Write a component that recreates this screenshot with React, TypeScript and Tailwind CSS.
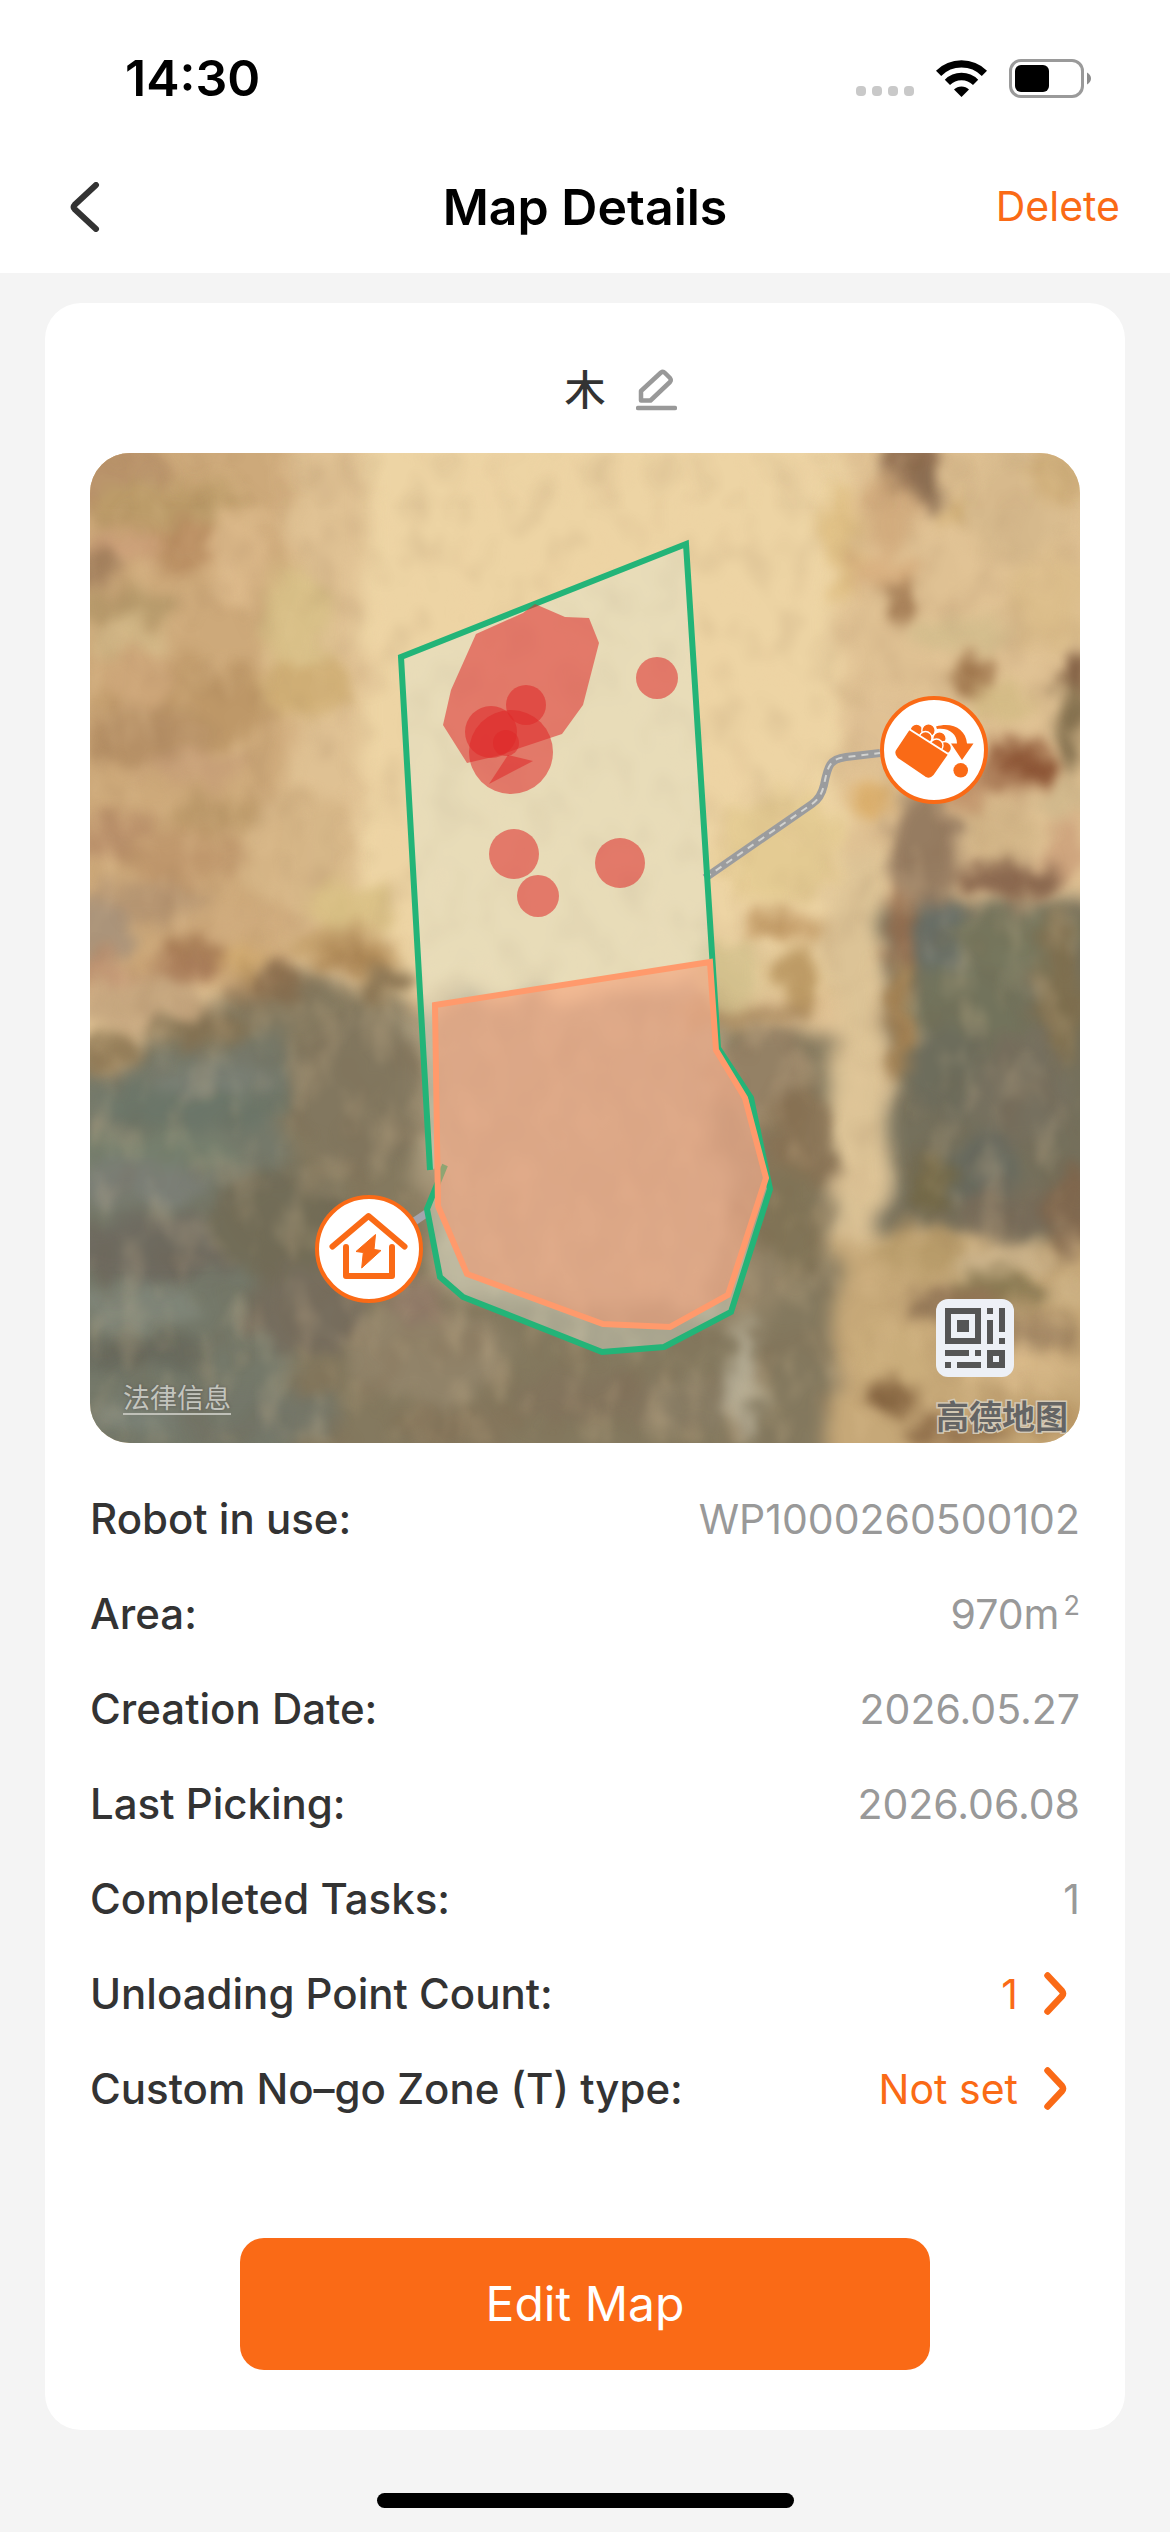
import type { ReactNode } from "react";

type Blob = [cx: number, cy: number, rx: number, ry: number, fill: string];

// soft patches of ground, painted in order over the base terrain
const groundPatches: Blob[] = [
  [20, 20, 60, 40, "#b8926a"],
  [83, 54, 80, 26, "#bb9b68"],
  [93, 94, 34, 24, "#b88c60"],
  [30, 92, 40, 16, "#cda07a"],
  [5, 117, 26, 18, "#a17e5c"],
  [33, 155, 50, 18, "#b5996a"],
  [35, 185, 44, 18, "#d2b887"],
  [207, 170, 34, 60, "#d9c188"],
  [150, 100, 30, 50, "#dcb98a"],
  [100, 250, 90, 44, "#bd9767"],
  [50, 230, 34, 34, "#cda679"],
  [57, 285, 70, 28, "#b48e64"],
  [215, 237, 50, 26, "#cfae74"],
  [100, 315, 50, 16, "#c79f78"],
  [120, 360, 50, 18, "#bc9a6a"],
  [30, 385, 50, 24, "#b98f6a"],
  [100, 405, 70, 28, "#bf976c"],
  [210, 400, 60, 60, "#d6b687"],
  [260, 455, 40, 26, "#d8bf83"],
  [57, 450, 60, 22, "#b59572"],
  [10, 480, 34, 34, "#a8927a"],
  [150, 468, 70, 16, "#d0ac7e"],
  [100, 492, 34, 14, "#a67b54"],
  [250, 492, 60, 16, "#c39f6a"],
  [93, 514, 34, 16, "#a67856"],
  [150, 508, 26, 14, "#cfa86c"],
  [50, 550, 60, 32, "#c4a57e"],
  [20, 520, 30, 16, "#bd9070"],
  [263, 506, 36, 12, "#a57e4c"],
  [180, 530, 34, 14, "#85694a"],
  [295, 530, 30, 18, "#86704f"],
  [110, 578, 50, 14, "#837253"],
  [20, 600, 34, 16, "#8f7955"],
  [100, 655, 90, 24, "#6b7669"],
  [60, 700, 90, 22, "#76806e"],
  [125, 625, 60, 20, "#7a8075"],
  [270, 640, 70, 80, "#82775f"],
  [50, 730, 70, 22, "#7c8078"],
  [67, 795, 100, 34, "#6e6a60"],
  [50, 853, 60, 24, "#808679"],
  [40, 900, 70, 18, "#686b5f"],
  [190, 770, 70, 60, "#726c57"],
  [217, 860, 60, 44, "#766d5e"],
  [150, 963, 100, 26, "#74776a"],
  [40, 965, 44, 18, "#7b8277"],
  [340, 900, 80, 50, "#93856b"],
  [370, 970, 70, 22, "#85765c"],
  [330, 850, 30, 20, "#917a68"],
  [510, 945, 90, 24, "#83745d"],
  [600, 950, 50, 30, "#897d65"],
  [670, 620, 50, 44, "#968266"],
  [710, 690, 34, 60, "#8a7456"],
  [690, 770, 40, 60, "#817457"],
  [660, 830, 40, 40, "#938468"],
  [640, 520, 34, 34, "#d2c08c"],
  [710, 525, 26, 34, "#b8955f"],
  [655, 563, 70, 12, "#ac8d62"],
  [690, 474, 44, 12, "#bd945f"],
  [690, 395, 60, 60, "#e4cb92"],
  [653, 925, 13, 64, "#bab29a"],
  [752, 85, 18, 60, "#e0c084"],
  [800, 60, 26, 44, "#d1aa7c"],
  [820, 10, 30, 24, "#866449"],
  [836, 38, 13, 20, "#80634a"],
  [868, 60, 18, 16, "#cdab70"],
  [930, 50, 60, 60, "#d6b98c"],
  [975, 20, 30, 30, "#cfae7a"],
  [790, 118, 36, 14, "#d6ac7c"],
  [808, 150, 13, 22, "#99704a"],
  [870, 180, 50, 16, "#d3bd8d"],
  [960, 150, 40, 50, "#dbbd8a"],
  [883, 220, 14, 18, "#8c6038"],
  [910, 250, 30, 22, "#d3bb85"],
  [987, 224, 15, 22, "#76533a"],
  [981, 274, 14, 48, "#786646"],
  [790, 270, 34, 34, "#dfc094"],
  [928, 312, 36, 20, "#844a2c"],
  [905, 330, 36, 14, "#9c6a48"],
  [780, 345, 24, 18, "#dcae68"],
  [865, 345, 40, 14, "#c79970"],
  [835, 400, 34, 60, "#8f755c"],
  [910, 380, 40, 30, "#d3b688"],
  [975, 345, 26, 22, "#d0b88c"],
  [977, 400, 20, 34, "#cda27c"],
  [920, 428, 54, 20, "#836049"],
  [810, 480, 12, 50, "#9a7050"],
  [850, 485, 26, 40, "#67706a"],
  [930, 490, 70, 34, "#77785f"],
  [810, 570, 12, 60, "#a88250"],
  [880, 560, 60, 50, "#72745d"],
  [970, 540, 24, 80, "#80704f"],
  [860, 620, 44, 50, "#6d6d5d"],
  [930, 640, 50, 60, "#777160"],
  [890, 715, 36, 34, "#666a60"],
  [840, 730, 22, 30, "#736846"],
  [930, 760, 60, 26, "#786c5a"],
  [980, 760, 20, 50, "#82684e"],
  [905, 806, 60, 16, "#ccb48c"],
  [975, 840, 24, 20, "#cdb285"],
  [830, 800, 50, 26, "#b79b69"],
  [905, 838, 50, 20, "#857650"],
  [860, 852, 50, 18, "#8f7354"],
  [930, 880, 60, 18, "#9a7f5e"],
  [800, 900, 40, 30, "#cbae7c"],
  [930, 915, 70, 20, "#d6b787"],
  [805, 945, 24, 16, "#805f3c"],
  [870, 978, 60, 14, "#8f6e4a"],
  [950, 968, 50, 14, "#b3905f"],
];

const noGoCircles = [
  { cx: 436, cy: 252, r: 20 },
  { cx: 401, cy: 279, r: 26 },
  { cx: 421, cy: 299, r: 42 },
  { cx: 416, cy: 290, r: 13 },
  { cx: 424, cy: 401, r: 25 },
  { cx: 448, cy: 443, r: 21 },
  { cx: 567, cy: 225, r: 21 },
  { cx: 530, cy: 410, r: 25 },
];

const FIELD = "340,717 311,204 596,91 628,595 661,645 680,736 641,859 574,894 512,899 373,844 350,824 337,756 355,712";
const PICKED = "345,552 620,509 626,597 655,645 676,725 638,842 580,874 513,871 377,821 348,753";
const ROAD = "M615 425 L722 351 Q731 345 734 332 C738 312 740 306 756 304 L790 300";

function Terrain() {
  return (
    <>
      <defs>
        <filter id="soft" x="-5%" y="-5%" width="110%" height="110%" colorInterpolationFilters="sRGB">
          <feTurbulence type="fractalNoise" baseFrequency="0.02" numOctaves="3" seed="3" result="n" />
          <feDisplacementMap in="SourceGraphic" in2="n" scale="50" xChannelSelector="R" yChannelSelector="G" />
          <feGaussianBlur stdDeviation="9" />
        </filter>
        <filter id="patchy" x="-10%" y="-10%" width="120%" height="120%" colorInterpolationFilters="sRGB">
          <feGaussianBlur in="SourceGraphic" stdDeviation="6" result="b" />
          <feTurbulence type="fractalNoise" baseFrequency="0.035 0.03" numOctaves="3" seed="11" result="n" />
          <feDisplacementMap in="b" in2="n" scale="36" xChannelSelector="R" yChannelSelector="G" />
          <feGaussianBlur stdDeviation="5" />
        </filter>
        <filter id="dark" x="0" y="0" width="100%" height="100%" colorInterpolationFilters="sRGB">
          <feTurbulence type="fractalNoise" baseFrequency="0.032 0.024" numOctaves="3" seed="7" />
          <feColorMatrix values="0 0 0 0 0.42  0 0 0 0 0.28  0 0 0 0 0.18  1.8 0 0 0 -0.85" />
          <feGaussianBlur stdDeviation="4" />
        </filter>
        <filter id="light" x="0" y="0" width="100%" height="100%" colorInterpolationFilters="sRGB">
          <feTurbulence type="fractalNoise" baseFrequency="0.036 0.02" numOctaves="3" seed="21" />
          <feColorMatrix values="0 0 0 0 0.94  0 0 0 0 0.82  0 0 0 0 0.64  0 1.8 0 0 -0.85" />
          <feGaussianBlur stdDeviation="3" />
        </filter>
      </defs>
      <rect width="990" height="990" fill="#dfc193" />
      <g filter="url(#soft)">
        <rect x="-60" y="-60" width="260" height="600" fill="#cda97a" />
        <rect x="270" y="-60" width="480" height="600" fill="#edd4a4" />
        <path d="M-60 605 L80 590 L140 540 L220 525 L300 535 L360 560 L520 545 L640 570 L742 580 L742 1060 L-60 1060 Z" fill="#84795f" />
        <path d="M-60 620 L80 605 L200 570 L200 1060 L-60 1060 Z" fill="#75796a" />
        <path d="M300 560 L630 530 L630 860 L350 840 Z" fill="#a89a7c" />
        <rect x="800" y="450" width="240" height="330" fill="#75705c" />
        <rect x="742" y="400" width="54" height="660" fill="#dcc396" />
        <rect x="742" y="780" width="300" height="280" fill="#c6a878" />
      </g>
      <g filter="url(#patchy)" opacity="0.9">
        {groundPatches.map(([cx, cy, rx, ry, fill], i) => (
          <ellipse key={i} cx={cx} cy={cy} rx={rx} ry={ry} fill={fill} />
        ))}
      </g>
      <rect width="990" height="990" filter="url(#dark)" opacity="0.16" />
      <rect width="990" height="990" filter="url(#light)" opacity="0.3" />
    </>
  );
}

function UnloadMarker() {
  return (
    <g transform="translate(790 243)">
      <circle cx="54" cy="54" r="52" fill="#fff" stroke="#fa6a16" strokeWidth="4" />
      <g fill="#fa6a16">
        <g stroke="#fff" strokeWidth="1.4">
          <circle cx="36.5" cy="34.5" r="6.5" />
          <circle cx="48.5" cy="34.5" r="6.7" />
          <circle cx="45.5" cy="42" r="6.5" />
          <circle cx="59.5" cy="42.5" r="6.7" />
          <circle cx="65" cy="52" r="6.5" />
          <circle cx="56.5" cy="49.5" r="6.5" />
          <path
            d="M29 33 L69 58.5 L54 80 Q50 84.5 45 81.5 L17 62.5 Q13 58 15 54 Z"
            strokeWidth="2"
          />
        </g>
        <path d="M56 30.5 C72 25.5 86 33 87 47.5 L93.5 47.5 L82 64 L71 47.5 L77 47.5 C77 38 69 31.5 57 33 Z" />
        <circle cx="80.7" cy="74.3" r="7.3" />
      </g>
    </g>
  );
}

function DockMarker() {
  return (
    <g transform="translate(225 742)">
      <circle cx="54" cy="54" r="52" fill="#fff" stroke="#fa6a16" strokeWidth="4" />
      <path
        d="M17.5 51.5 L53.5 21 L89.5 51.5 M31 52 V81 H77 V52"
        fill="none"
        stroke="#fa6a16"
        strokeWidth="6"
        strokeLinecap="round"
        strokeLinejoin="round"
      />
      <path
        d="M60.5 39.5 L59 54.5 L66 55.5 L46.7 73 L48.3 57.5 L41 56.5 Z"
        fill="#fa6a16"
        stroke="#fa6a16"
        strokeLinejoin="round"
      />
    </g>
  );
}

function QrIcon() {
  return (
    <svg viewBox="0 0 78 78" className="size-[78px]" fill="#555" aria-hidden="true">
      <rect width="78" height="78" rx="12" fill="#edf0f6" />
      <path
        fillRule="evenodd"
        d="M9 9h36v36h-36z M15 15v24h24v-24z M21 21h12v12h-12z M51 9h6v6h-6z M63 9h6v24h-6z M51 21h6v24h-6z M63 39h6v6h-6z M9 51h24v6h-24z M39 51h6v6h-6z M9 63h6v6h-6z M21 63h24v6h-24z M51 51h18v18h-18z M57 57v6h6v-6z"
      />
    </svg>
  );
}

function FieldMap() {
  return (
    <div className="relative overflow-hidden rounded-[40px]">
      <svg viewBox="0 0 990 990" className="block w-full" role="img" aria-label="Field map">
        <Terrain />
        <polygon points={FIELD} fill="#e1e8d7" fillOpacity="0.4" />
        <path d={ROAD} fill="none" stroke="#9b9c9e" strokeWidth="8" />
        <path d={ROAD} fill="none" stroke="#d3d3d0" strokeWidth="2" strokeDasharray="7 6" />
        <path d="M322 770 L337 760" stroke="#a3a5ad" strokeWidth="8" />
        <polyline points={FIELD} fill="none" stroke="#23b478" strokeWidth="6" />
        <polygon points={PICKED} fill="#fa966e" fillOpacity="0.5" stroke="#ff9a6c" strokeWidth="6" />
        <g fill="#de2828" fillOpacity="0.55">
          <polygon points="445,151 475,164 499,165 509,190 493,252 472,281 430,295 407,303 377,310 353,272 361,237 386,181 433,160" />
          {noGoCircles.map((c) => (
            <circle key={`${c.cx}-${c.cy}`} cx={c.cx} cy={c.cy} r={c.r} />
          ))}
          <polygon points="418,302 443,308 399,331" />
        </g>
        <UnloadMarker />
        <DockMarker />
      </svg>
      <a
        href="#legal"
        className="absolute bottom-7 left-[33px] border-b-2 border-[#bfc0b8] text-[27px] leading-7 text-[#c3c4bd] [text-shadow:0_0_3px_#555]"
      >
        法律信息
      </a>
      <div className="absolute right-[66px] bottom-[66px]">
        <QrIcon />
      </div>
      <span className="absolute right-3 bottom-1.5 text-[33px] leading-10 font-bold text-[#646464] [-webkit-text-stroke:3px_#d3c8b4] [paint-order:stroke_fill]">
        高德地图
      </span>
    </div>
  );
}

function StatusBar() {
  return (
    <div className="flex h-[141px] items-center justify-between pt-[15px] pr-[79px] pl-[125px]">
      <span className="text-[50px] leading-none font-semibold text-black">14:30</span>
      <div className="flex items-center gap-[22px]">
        <svg viewBox="0 0 58 39" className="h-[39px] w-[58px]" fill="#c9c9c9" aria-hidden="true">
          <rect x="0" y="27" width="10" height="10" rx="4" />
          <rect x="16" y="27" width="10" height="10" rx="4" />
          <rect x="32" y="27" width="10" height="10" rx="4" />
          <rect x="48" y="27" width="10" height="10" rx="4" />
        </svg>
        <svg viewBox="0 0 51 39" className="h-[39px] w-[51px]" aria-hidden="true">
          <g fill="none" stroke="#000" strokeWidth="7.4">
            <path d="M2.6 14.3 A32.5 32.5 0 0 1 48.4 14.3" />
            <path d="M11.4 23.3 A20 20 0 0 1 39.6 23.3" />
          </g>
          <path d="M18 30.5 A10.6 10.6 0 0 1 33 30.5 L25.5 38 Z" />
        </svg>
        <svg viewBox="0 0 82 39" className="h-[39px] w-[82px]" aria-hidden="true">
          <rect x="1.5" y="1.5" width="72" height="36" rx="10.5" fill="none" stroke="#9a9a9a" strokeWidth="3" />
          <rect x="6" y="6" width="34" height="27" rx="6" />
          <path d="M78 13.5 Q82 16 82 19.5 Q82 23 78 25.5 Z" fill="#8c8c8c" />
        </svg>
      </div>
    </div>
  );
}

function Row({ label, children, onClick }: { label: string; children: ReactNode; onClick?: () => void }) {
  return (
    <div className="flex h-[95px] items-center justify-between">
      <dt className="text-[42px] font-medium text-[#333]">{label}</dt>
      <dd className="text-[#999]">
        {onClick ? (
          <button type="button" aria-label={label} onClick={onClick} className="flex items-center gap-[26px] pr-[13px] text-[#fa6a16]">
            {children}
            <svg viewBox="0 0 23 43" className="h-[43px] w-[23px]" aria-hidden="true">
              <path
                d="M3.5 3.5 L18 19 Q20 21.5 18 24 L3.5 39.5"
                fill="none"
                stroke="#fa6a16"
                strokeWidth="6.5"
                strokeLinecap="round"
              />
            </svg>
          </button>
        ) : (
          children
        )}
      </dd>
    </div>
  );
}

export default function App() {
  return (
    <div className="flex min-h-screen flex-col bg-[#f4f4f4] font-[Inter,'Noto_Sans_CJK_SC',sans-serif]">
      <header className="bg-white">
        <StatusBar />
        <div className="grid h-[132px] grid-cols-[1fr_auto_1fr] items-center px-[50px]">
          <button type="button" aria-label="Back" className="justify-self-start px-5">
            <svg viewBox="0 0 30 50" className="h-[50px] w-[30px]" aria-hidden="true">
              <path
                d="M26 3 L4.5 23 Q2.5 25 4.5 27 L26 47"
                fill="none"
                stroke="#333"
                strokeWidth="6"
                strokeLinecap="round"
              />
            </svg>
          </button>
          <h1 className="text-[50px] leading-none font-semibold text-black">Map Details</h1>
          <button type="button" className="justify-self-end text-[41px] text-[#fa6a16]">
            Delete
          </button>
        </div>
      </header>

      <main className="mx-[45px] mt-[30px] rounded-[36px] bg-white px-[45px] pb-[60px]">
        <div className="grid h-[150px] grid-cols-[1fr_auto_1fr] items-center pt-6">
          <h2 className="col-start-2 text-[41px] leading-none font-medium text-[#333]">木</h2>
          <button type="button" aria-label="Rename map" className="ml-[30px] justify-self-start">
            <svg viewBox="0 0 41 42" className="h-[42px] w-[41px]" fill="none" stroke="#999" aria-hidden="true">
              <path d="M5 31 V22 L25 3.5 Q27 2 29 4 L34 9 Q35.5 11 34 13 L14.5 31.5 H5 Z" strokeWidth="4.5" strokeLinejoin="round" />
              <path d="M2 39 H39" strokeWidth="4.5" strokeLinecap="round" />
            </svg>
          </button>
        </div>

        <FieldMap />

        <dl className="mt-[28px] text-[41px] leading-[48px]">
          <Row label="Robot in use:">WP1000260500102</Row>
          <Row label="Area:">
            970m<sup className="ml-1 text-[27px]">2</sup>
          </Row>
          <Row label="Creation Date:">2026.05.27</Row>
          <Row label="Last Picking:">2026.06.08</Row>
          <Row label="Completed Tasks:">1</Row>
          <Row label="Unloading Point Count:" onClick={() => {}}>
            1
          </Row>
          <Row label="Custom No–go Zone (T) type:" onClick={() => {}}>
            Not set
          </Row>
        </dl>

        <button
          type="button"
          className="mx-auto mt-[102px] block h-[132px] w-[690px] max-w-full rounded-3xl bg-[#fa6a16] text-[48px] text-white"
        >
          Edit Map
        </button>
      </main>

      <div className="mx-auto mt-auto mb-6 h-[15px] w-[417px] rounded-full bg-black" />
    </div>
  );
}
